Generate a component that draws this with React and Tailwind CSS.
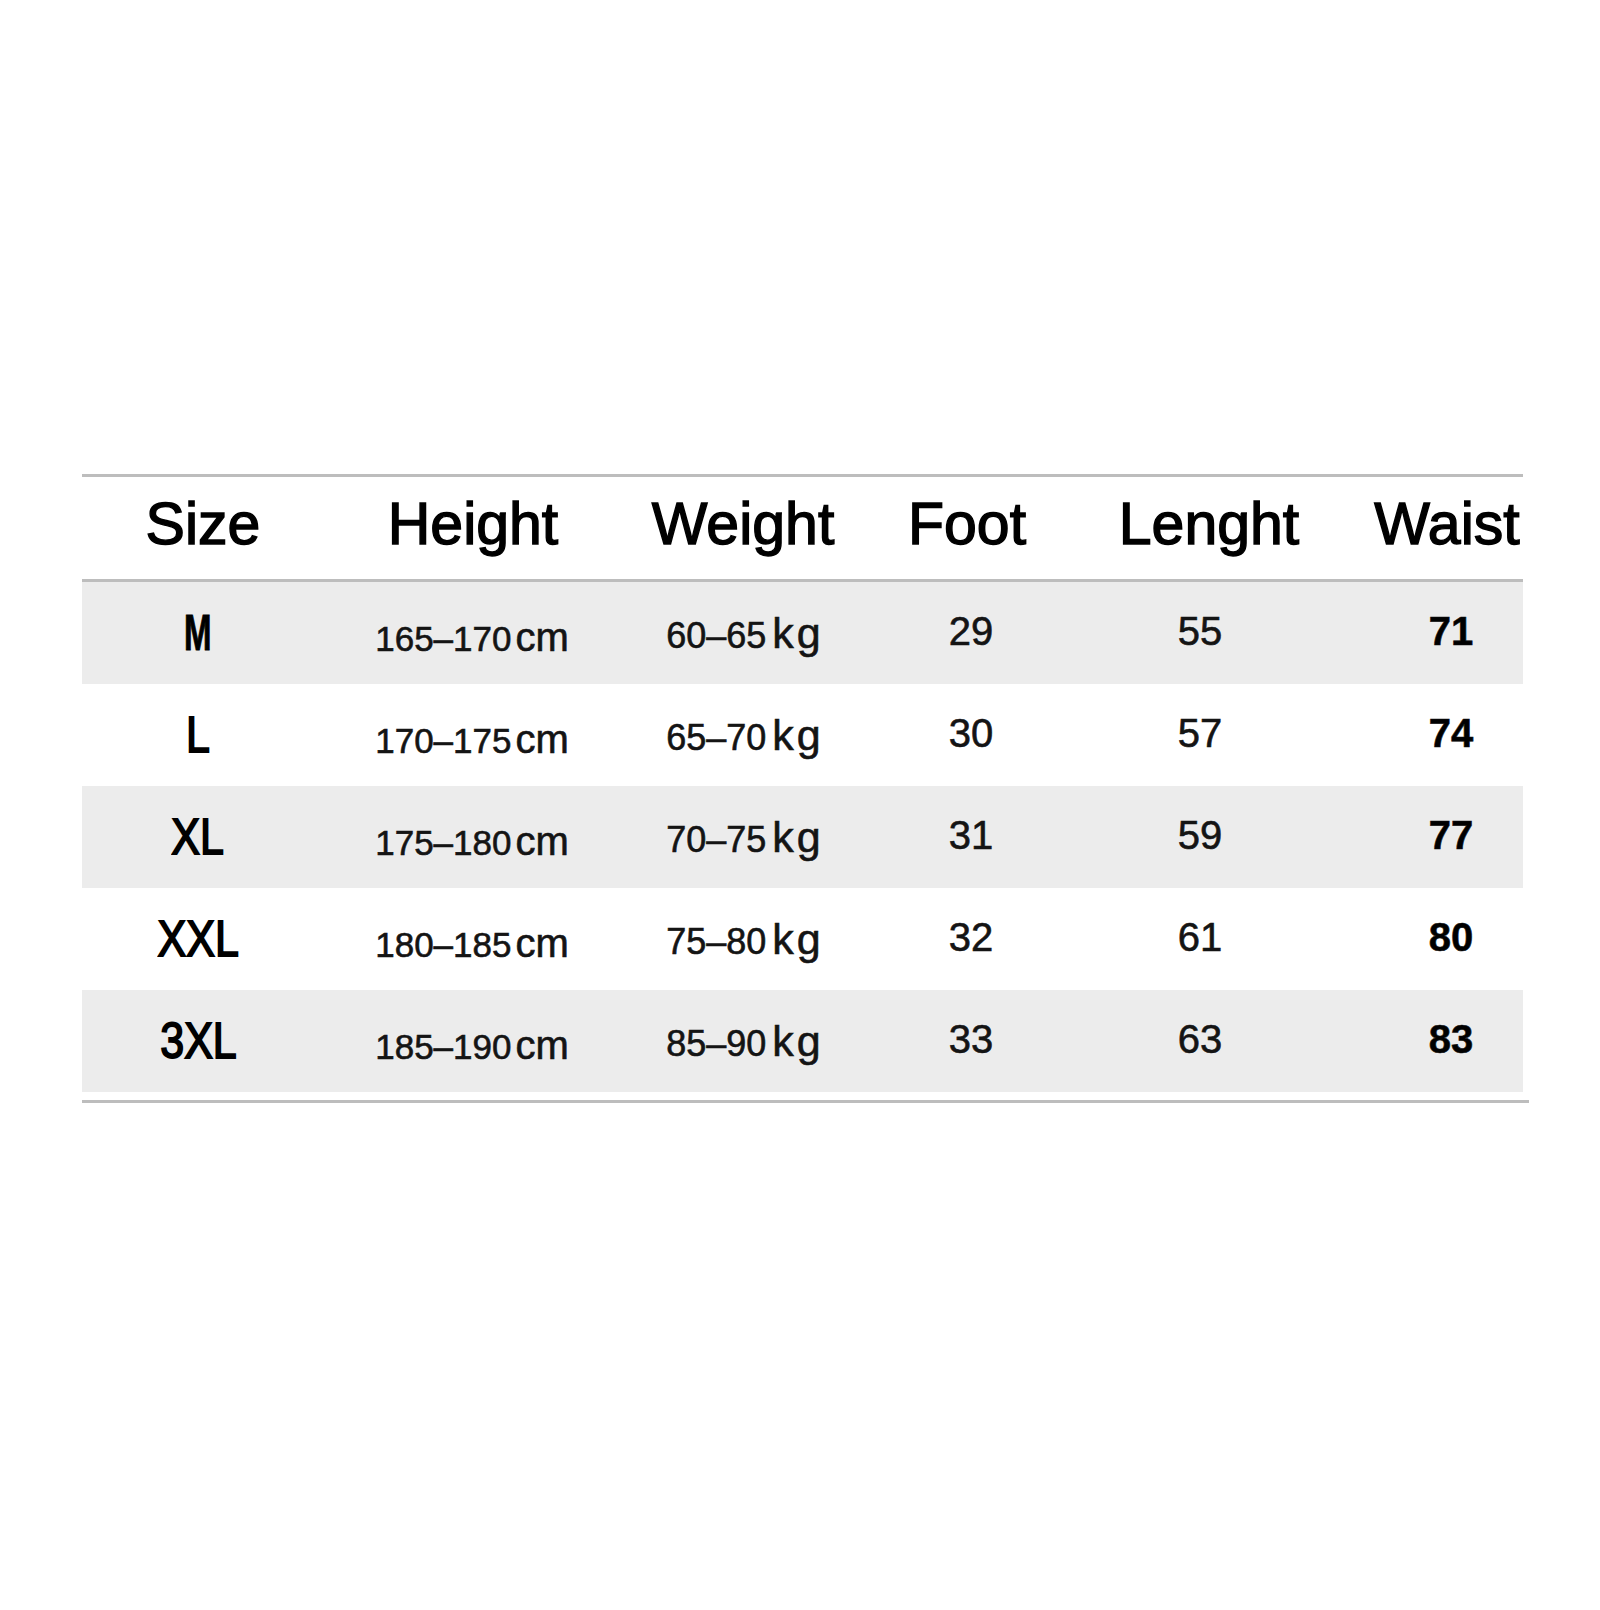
import React from "react";

const rows = [
  { size: "M", height: "165–170", weight: "60–65", foot: "29", length: "55", waist: "71" },
  { size: "L", height: "170–175", weight: "65–70", foot: "30", length: "57", waist: "74" },
  { size: "XL", height: "175–180", weight: "70–75", foot: "31", length: "59", waist: "77" },
  { size: "XXL", height: "180–185", weight: "75–80", foot: "32", length: "61", waist: "80" },
  { size: "3XL", height: "185–190", weight: "85–90", foot: "33", length: "63", waist: "83" },
];

const headers = ["Size", "Height", "Weight", "Foot", "Lenght", "Waist"];

const App = () => {
  return (
    <div className="min-h-screen bg-white pt-[474px] pl-[82px] font-['Liberation_Sans',Arial,sans-serif]">
      <div className="w-[1441px]">
        {/* header */}
        <div className="h-[3px] bg-[#bdbdbd]" />
        <div className="h-[102px] grid grid-cols-[242px_298px_242px_206px_278px_198px] items-center pb-2">
          {headers.map((h) => (
            <div
              key={h}
              className="flex justify-center text-[59px] leading-none text-black [-webkit-text-stroke:1.4px_#000]"
            >
              {h}
            </div>
          ))}
        </div>
        <div className="h-[3px] bg-[#bdbdbd]" />

        {/* body */}
        {rows.map((r, i) => (
          <div
            key={r.size}
            className={`h-[102px] grid grid-cols-[232px_316px_230px_222px_236px_266px] items-center text-[#141414] [-webkit-text-stroke:0.6px_#141414] ${
              i % 2 === 0 ? "bg-[#ececec]" : "bg-white"
            }`}
          >
            <div className="flex justify-center">
              <span
                className={`inline-block text-[50px] leading-none text-black ${
                  r.size === "M"
                    ? "font-bold scale-x-[0.66] [-webkit-text-stroke:1px_#000]"
                    : "scale-x-[0.86] [-webkit-text-stroke:1.8px_#000]"
                }`}
              >
                {r.size}
              </span>
            </div>
            <div className="flex justify-center items-baseline pt-2 leading-none">
              <span className="text-[35px]">{r.height}</span>
              <span className="text-[40px] ml-1">cm</span>
            </div>
            <div className="flex justify-center items-baseline leading-none">
              <span className="text-[36px]">{r.weight}</span>
              <span className="text-[43px] ml-1.5 tracking-[3px]">kg</span>
            </div>
            <div className="flex justify-center text-[40px] leading-none -mt-1">{r.foot}</div>
            <div className="flex justify-center text-[40px] leading-none -mt-1">{r.length}</div>
            <div className="flex justify-center text-[40px] font-bold leading-none text-black -mt-1">
              {r.waist}
            </div>
          </div>
        ))}

        <div className="mt-2 h-[3px] w-[1447px] bg-[#bdbdbd]" />
      </div>
    </div>
  );
};

export default App;
